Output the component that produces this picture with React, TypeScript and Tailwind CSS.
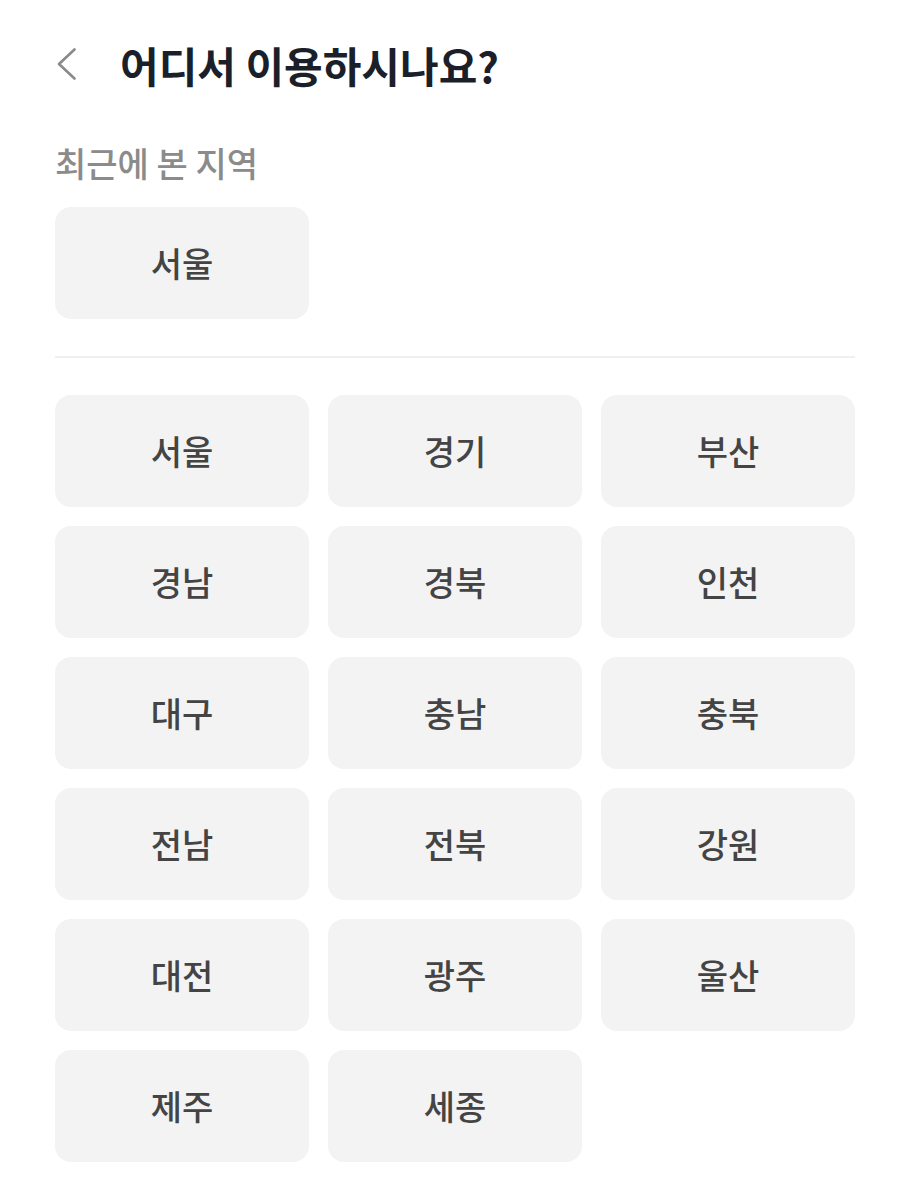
const RECENT = ["서울"];

const REGIONS = [
  "서울", "경기", "부산",
  "경남", "경북", "인천",
  "대구", "충남", "충북",
  "전남", "전북", "강원",
  "대전", "광주", "울산",
  "제주", "세종",
];

const RegionChip = ({ name }: { name: string }) => (
  <button
    type="button"
    className="flex h-[112px] items-center justify-center rounded-[16px] bg-[#f3f3f3] text-[34px] font-medium text-[#444444]"
  >
    {name}
  </button>
);

export default function App() {
  return (
    <div
      className="min-h-[1200px] bg-white px-[55px]"
      style={{ fontFamily: '"Noto Sans CJK KR", "Noto Sans", sans-serif' }}
    >
      {/* Header */}
      <div className="box-content flex h-[80px] items-center pt-[24px]">
        <button type="button" className="flex w-[65px] items-center text-[#8a8a8a]">
          <svg width="22" height="34" viewBox="0 0 22 34" fill="none">
            <path
              d="M19.5 2.5L4 17l15.5 14.5"
              stroke="currentColor"
              strokeWidth="2.6"
              strokeLinecap="round"
              strokeLinejoin="round"
            />
          </svg>
        </button>
        <h1 className="text-[42px] font-bold text-[#1b1f29]">어디서 이용하시나요?</h1>
      </div>

      {/* Recent */}
      <p className="mt-[35px] text-[34px] font-medium leading-[1.4] text-[#8b8b8b]">
        최근에 본 지역
      </p>
      <div className="mt-[20px] grid grid-cols-3 gap-[19px]">
        {RECENT.map((r) => (
          <RegionChip key={r} name={r} />
        ))}
      </div>

      <div className="mt-[37px] h-[2px] bg-[#f0f0f0]" />

      {/* All regions */}
      <div className="mt-[37px] grid grid-cols-3 gap-[19px]">
        {REGIONS.map((r) => (
          <RegionChip key={r} name={r} />
        ))}
      </div>
    </div>
  );
}
